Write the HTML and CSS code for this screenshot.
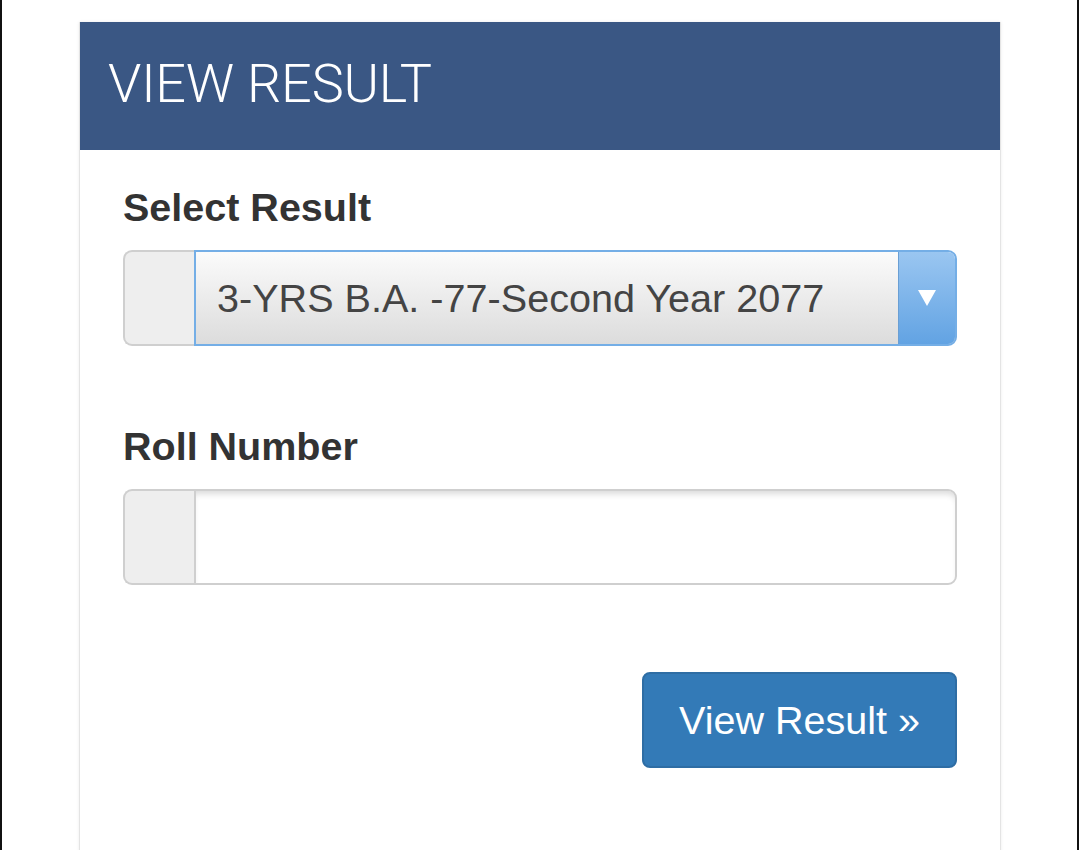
FILE: index.html
```html
<!DOCTYPE html>
<html>
<head>
<meta charset="utf-8">
<link rel="stylesheet" href="styles.css">
</head>
<body>
<div class="frame">
  <div class="panel">
    <div class="panel-head">
      <h1 class="title">VIEW RESULT</h1>
    </div>
    <div class="panel-body">
      <label class="label">Select Result</label>
      <div class="group">
        <span class="addon"></span>
        <div class="select">
          <span class="select-text">3-YRS B.A. -77-Second Year 2077</span>
          <span class="select-arrow">
            <svg width="18" height="16" viewBox="0 0 18 16"><path d="M0 0 L18 0 L9 16 Z" fill="#ffffff"/></svg>
          </span>
        </div>
      </div>
      <label class="label label-roll">Roll Number</label>
      <div class="group">
        <span class="addon addon-plain"></span>
        <div class="input"></div>
      </div>
      <div class="actions">
        <button class="btn">View Result »</button>
      </div>
    </div>
  </div>
</div>
</body>
</html>
```

FILE: styles.css
```css
html, body {
  margin: 0;
  padding: 0;
  background: #ffffff;
}
.frame {
  height: 850px;
  box-sizing: border-box;
  border-left: 2px solid #111;
  border-right: 2px solid #111;
  padding-top: 22px;
  overflow: hidden;
  font-family: "Liberation Sans", Arial, sans-serif;
}
.panel {
  margin-left: 77px;
  width: 922px;
  height: 900px;
  box-sizing: border-box;
  border-left: 1px solid #e4e4e4;
  border-right: 1px solid #e4e4e4;
  box-shadow: 0 0 3px rgba(0,0,0,0.08);
  background: #fff;
}
.panel-head {
  height: 128px;
  background: #3a5784;
  display: flex;
  align-items: center;
  padding-left: 28px;
  box-sizing: border-box;
}
.title {
  margin: 0;
  color: #ffffff;
  font-family: Roboto, "Liberation Sans", sans-serif;
  font-weight: 300;
  font-size: 54px;
  letter-spacing: -0.2px;
  line-height: 1;
  padding-bottom: 4px;
}
.panel-body {
  padding: 34px 43px 0 43px;
  display: flex;
  flex-direction: column;
}
.label {
  font-weight: bold;
  font-size: 39.5px;
  line-height: 47px;
  color: #333;
  margin-bottom: 19px;
}
.label-roll {
  margin-top: 77px;
}
.group {
  display: flex;
  height: 96px;
}
.addon {
  width: 71px;
  box-sizing: border-box;
  background: #eeeeee;
  border: 2px solid #cfcfcf;
  border-right: none;
  border-radius: 9px 0 0 9px;
}
.select {
  flex: 1;
  display: flex;
  align-items: stretch;
  border: 2px solid #74aee6;
  border-radius: 0 9px 9px 0;
  background: linear-gradient(#fbfbfb, #dcdcdc);
  overflow: hidden;
}
.select-text {
  flex: 1;
  display: flex;
  align-items: center;
  padding-left: 21px;
  font-size: 39.6px;
  color: #444;
}
.select-arrow {
  width: 56px;
  display: flex;
  align-items: center;
  justify-content: center;
  background: linear-gradient(#9ac6f1, #62a3e3);
  border-left: 1px solid #6a9fd4;
}
.addon-plain {
  height: 96px;
}
.input {
  flex: 1;
  box-sizing: border-box;
  border: 2px solid #cfcfcf;
  border-radius: 0 9px 9px 0;
  background: #fff;
  box-shadow: inset 0 6px 6px -3px rgba(0,0,0,0.15);
}
.actions {
  display: flex;
  justify-content: flex-end;
  margin-top: 87px;
}
.btn {
  width: 315px;
  height: 96px;
  background: #337ab7;
  border: 2px solid #2e6da4;
  border-radius: 8px;
  color: #fff;
  font-family: "Liberation Sans", Arial, sans-serif;
  font-size: 39.5px;
  padding: 0;
}
```
